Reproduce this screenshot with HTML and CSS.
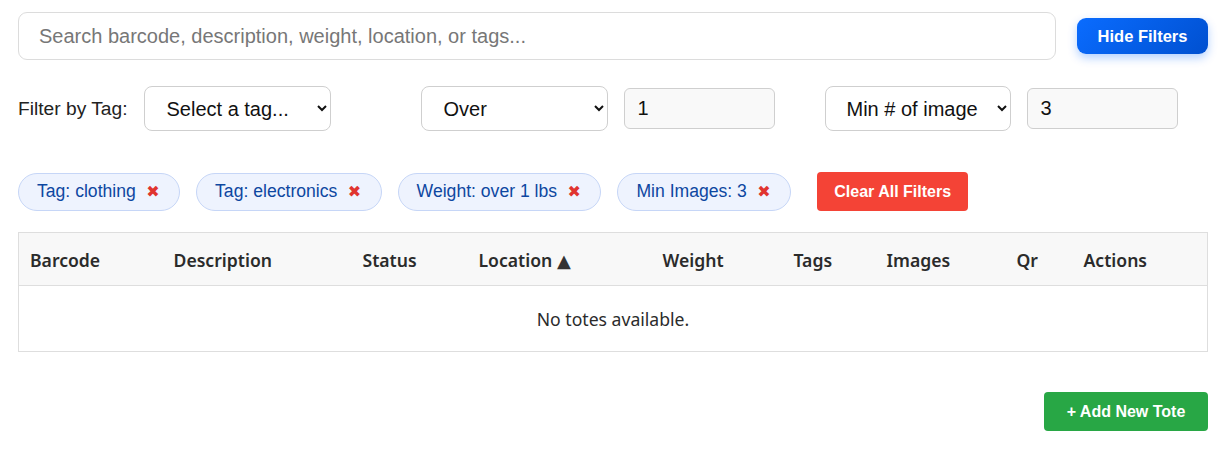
FILE: index.html
```html
<!DOCTYPE html>
<html lang="en">
<head>
<meta charset="utf-8">
<title>Totes</title>
<link rel="stylesheet" href="styles.css">
</head>
<body>
<div class="page">
  <div class="top-row">
    <input class="search" type="text" placeholder="Search barcode, description, weight, location, or tags...">
    <button class="btn-hide">Hide Filters</button>
  </div>

  <div class="filter-row">
    <div class="group group-tag">
      <label class="filter-label">Filter by Tag:</label>
      <select class="sel sel-tag"><option>Select a tag...</option></select>
    </div>
    <div class="group group-weight">
      <select class="sel"><option>Over</option></select>
      <input class="num" type="text" value="1">
    </div>
    <div class="group group-images">
      <select class="sel sel-images"><option>Min # of images</option></select>
      <input class="num" type="text" value="3">
    </div>
  </div>

  <div class="chips-row">
    <span class="chip">Tag: clothing <span class="x">✖</span></span>
    <span class="chip">Tag: electronics <span class="x">✖</span></span>
    <span class="chip">Weight: over 1 lbs <span class="x">✖</span></span>
    <span class="chip">Min Images: 3 <span class="x">✖</span></span>
    <button class="btn-clear">Clear All Filters</button>
  </div>

  <table class="totes">
    <colgroup>
      <col class="c-barcode"><col class="c-desc"><col class="c-status"><col class="c-loc"><col class="c-weight"><col class="c-tags"><col class="c-images"><col class="c-qr"><col class="c-actions">
    </colgroup>
    <thead>
      <tr>
        <th>Barcode</th><th>Description</th><th>Status</th><th>Location <span class="sort">▲</span></th><th>Weight</th><th>Tags</th><th>Images</th><th>Qr</th><th>Actions</th>
      </tr>
    </thead>
    <tbody>
      <tr><td class="empty" colspan="9">No totes available.</td></tr>
    </tbody>
  </table>

  <div class="bottom-row">
    <button class="btn-add">+ Add New Tote</button>
  </div>
</div>
</body>
</html>
```

FILE: styles.css
```css
* { box-sizing: border-box; }
html, body { margin: 0; padding: 0; background: #fff; }
body { font-family: "Liberation Sans", Arial, sans-serif; color: #222; }

.page { padding: 12px 19px 0 18px; }

.top-row { display: flex; align-items: center; gap: 21px; }
.search {
  flex: 1;
  height: 48px;
  border: 1px solid #dcdcdc;
  border-radius: 9px;
  padding: 0 20px;
  font-family: "Liberation Sans", Arial, sans-serif;
  font-size: 20px;
  color: #333;
  background: #fff;
  outline: none;
}
.search::placeholder { color: #777; }

.btn-hide {
  width: 131px;
  height: 36px;
  border: none;
  border-radius: 9px;
  background: linear-gradient(135deg, #0a6cff 0%, #0050d0 100%);
  color: #fff;
  font-family: "Liberation Sans", Arial, sans-serif;
  font-weight: bold;
  font-size: 16.5px;
  box-shadow: 0 4px 10px rgba(0, 102, 255, 0.3);
}

.filter-row { display: flex; align-items: center; margin-top: 26px; height: 45px; }
.group { display: flex; align-items: center; }
.group-tag { gap: 17px; }
.group-weight { gap: 16px; margin-left: 90px; }
.group-images { gap: 16px; margin-left: 50px; }
.filter-label { font-size: 19.2px; color: #222; }

.sel {
  height: 45px;
  width: 187px;
  border: 1px solid #cfcfcf;
  border-radius: 8px;
  background: #fff;
  font-family: "Liberation Sans", Arial, sans-serif;
  font-size: 20px;
  color: #111;
  padding: 0 6px 0 17px;
}
.sel-tag { width: 187px; }
.sel-images { width: 186px; padding-left: 16px; padding-right: 16px; }
.num {
  width: 151px;
  height: 41px;
  border: 1px solid #cfcfcf;
  border-radius: 6px;
  background: #f9f9f9;
  font-family: "Liberation Sans", Arial, sans-serif;
  font-size: 20px;
  color: #111;
  padding: 0 12px;
}

.chips-row { display: flex; align-items: center; gap: 16px; margin-top: 41px; height: 39px; }
.chip {
  display: inline-flex;
  align-items: center;
  height: 38px;
  padding: 0 19.5px 0 18px;
  border: 1px solid #c6d6f7;
  border-radius: 19px;
  background: #eef3fe;
  color: #0d47a1;
  font-size: 17.6px;
  white-space: pre;
}
.chip .x { color: #e0342f; font-size: 16px; font-weight: bold; margin-left: 5.5px; font-family: "DejaVu Sans", sans-serif; }
.btn-clear {
  margin-left: 10px;
  width: 151px;
  height: 39px;
  border: none;
  border-radius: 4px;
  background: #f44336;
  color: #fff;
  font-family: "Liberation Sans", Arial, sans-serif;
  font-weight: bold;
  font-size: 16px;
}

.totes {
  margin-top: 21px;
  width: 100%;
  table-layout: fixed;
  border-collapse: collapse;
  border: 1px solid #dedede;
  font-family: "Noto Sans", "Open Sans", sans-serif;
  font-size: 17.6px;
  color: #2b2b2b;
}
.c-barcode { width: 144px; }
.c-desc { width: 189px; }
.c-status { width: 116px; }
.c-loc { width: 184px; }
.c-weight { width: 131px; }
.c-tags { width: 93px; }
.c-images { width: 130px; }
.c-qr { width: 67px; }
.c-actions { width: 135px; }
.totes th {
  text-align: left;
  font-weight: 600;
  background: #f8f8f8;
  height: 53px;
  padding: 1px 11px 0;
  border-bottom: 1px solid #dedede;
}
.sort { font-family: "DejaVu Sans", sans-serif; font-size: 18px; color: #333; }
.totes td.empty { text-align: center; height: 66px; padding: 0; font-size: 17.6px; }

.bottom-row { display: flex; justify-content: flex-end; margin-top: 40px; }
.btn-add {
  width: 164px;
  height: 39px;
  border: none;
  border-radius: 4px;
  background: #28a745;
  color: #fff;
  font-family: "Liberation Sans", Arial, sans-serif;
  font-weight: bold;
  font-size: 16px;
}
```
